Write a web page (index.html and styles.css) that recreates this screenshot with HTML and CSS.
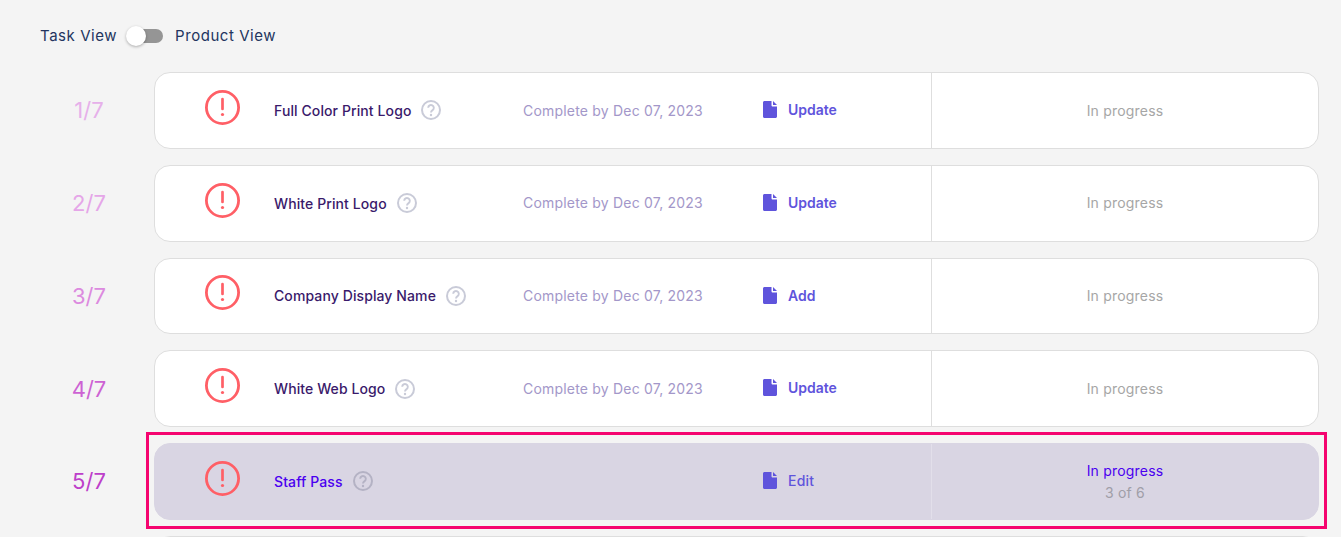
FILE: index.html
```html
<!DOCTYPE html>
<html lang="en">
<head>
    <meta charset="UTF-8">
    <meta name="viewport" content="width=device-width, initial-scale=1.0">
    <title>Tasks</title>
    <link rel="stylesheet" href="styles.css">
</head>
<body>
    <svg class="icon-defs" width="0" height="0">
        <symbol id="alert" viewBox="0 0 35 35">
            <circle cx="17.5" cy="17.5" r="16.1" fill="none" stroke="currentColor" stroke-width="2.8"/>
            <path d="M17.5 9v10" fill="none" stroke="currentColor" stroke-width="2.7" stroke-linecap="round"/>
            <circle cx="17.5" cy="24.5" r="1.6" fill="currentColor"/>
        </symbol>
        <symbol id="help" viewBox="0 0 20 20">
            <circle cx="10" cy="10" r="9" fill="none" stroke="currentColor" stroke-width="2"/>
            <path d="M7.2 7.8a2.8 2.8 0 1 1 4.4 2.3c-1 .7-1.6 1.2-1.6 2.3" fill="none" stroke="currentColor" stroke-width="1.9"/>
            <circle cx="10" cy="15" r="1.2" fill="currentColor"/>
        </symbol>
        <symbol id="doc" viewBox="0 0 14 17">
            <path d="M1.5 0H8.5V4.2C8.5 5 9 5.5 9.8 5.5H14V15.5C14 16.3 13.3 17 12.5 17H1.5C.7 17 0 16.3 0 15.5V1.5C0 .7.7 0 1.5 0ZM10 0L14 4H10Z" fill="currentColor"/>
        </symbol>
    </svg>

    <div class="view-toggle">
        <span>Task View</span>
        <span class="switch"><span class="switch-knob"></span></span>
        <span>Product View</span>
    </div>

    <div class="task-list">
        <div class="task-row">
            <div class="step step-1">1/7</div>
            <div class="card">
                <svg class="alert-icon"><use href="#alert"/></svg>
                <div class="task-name">Full Color Print Logo <svg class="help-icon"><use href="#help"/></svg></div>
                <div class="due">Complete by Dec 07, 2023</div>
                <div class="action"><svg class="doc-icon"><use href="#doc"/></svg>Update</div>
                <div class="status">In progress</div>
            </div>
        </div>
        <div class="task-row">
            <div class="step step-2">2/7</div>
            <div class="card">
                <svg class="alert-icon"><use href="#alert"/></svg>
                <div class="task-name">White Print Logo <svg class="help-icon"><use href="#help"/></svg></div>
                <div class="due">Complete by Dec 07, 2023</div>
                <div class="action"><svg class="doc-icon"><use href="#doc"/></svg>Update</div>
                <div class="status">In progress</div>
            </div>
        </div>
        <div class="task-row">
            <div class="step step-3">3/7</div>
            <div class="card">
                <svg class="alert-icon"><use href="#alert"/></svg>
                <div class="task-name">Company Display Name <svg class="help-icon"><use href="#help"/></svg></div>
                <div class="due">Complete by Dec 07, 2023</div>
                <div class="action"><svg class="doc-icon"><use href="#doc"/></svg>Add</div>
                <div class="status">In progress</div>
            </div>
        </div>
        <div class="task-row">
            <div class="step step-4">4/7</div>
            <div class="card">
                <svg class="alert-icon"><use href="#alert"/></svg>
                <div class="task-name">White Web Logo <svg class="help-icon"><use href="#help"/></svg></div>
                <div class="due">Complete by Dec 07, 2023</div>
                <div class="action"><svg class="doc-icon"><use href="#doc"/></svg>Update</div>
                <div class="status">In progress</div>
            </div>
        </div>
        <div class="task-row">
            <div class="step step-5">5/7</div>
            <div class="card card-active">
                <svg class="alert-icon"><use href="#alert"/></svg>
                <div class="task-name">Staff Pass <svg class="help-icon"><use href="#help"/></svg></div>
                <div class="due"></div>
                <div class="action"><svg class="doc-icon"><use href="#doc"/></svg>Edit</div>
                <div class="status">
                    <div class="status-label">In progress</div>
                    <div class="status-count">3 of 6</div>
                </div>
                <div class="highlight"></div>
            </div>
        </div>
        <div class="task-row">
            <div class="step"></div>
            <div class="card">
                <div></div><div></div><div></div><div></div>
                <div class="status"></div>
            </div>
        </div>
    </div>
</body>
</html>
```

FILE: styles.css
```css
html, body {
    height: 537px;
    overflow: hidden;
}
body {
    margin: 0;
    background-color: #f4f4f4;
    font-family: Inter, "Liberation Sans", sans-serif;
    font-size: 14px;
}
.icon-defs {
    position: absolute;
}
.view-toggle {
    display: flex;
    align-items: center;
    height: 20px;
    padding: 25px 0 0 40px;
    color: #23345f;
    font-size: 15px;
    letter-spacing: 0.55px;
}
.switch {
    position: relative;
    width: 36px;
    height: 14px;
    margin: 2px 12px 0 10px;
    border-radius: 7px;
    background-color: #959595;
}
.switch-knob {
    position: absolute;
    top: -3px;
    left: -1px;
    width: 20px;
    height: 20px;
    border-radius: 50%;
    background-color: white;
    box-shadow: 0 1px 3px rgba(0, 0, 0, 0.3);
}
.task-list {
    display: flex;
    flex-direction: column;
    gap: 16px;
    padding: 27px 22px 0 22px;
}
.task-row {
    display: flex;
    align-items: center;
}
.step {
    flex: 0 0 132px;
    box-sizing: border-box;
    padding: 0 0 0 2px;
    text-align: center;
    font-size: 22px;
}
.step-1 { color: #e6b0ea; }
.step-2 { color: #e5a6e8; }
.step-3 { color: #dc8adf; }
.step-4 { color: #cd62d3; }
.step-5 { color: #bd3fca; }
.card {
    position: relative;
    flex: 1;
    display: grid;
    grid-template-columns: 119px 249px 240px 168px 1fr;
    align-items: center;
    height: 76.75px;
    box-sizing: border-box;
    border: 1px solid #dedede;
    border-radius: 16px;
    background-color: white;
}
.alert-icon {
    width: 35px;
    height: 35px;
    margin: -6px 0 0 50px;
    color: #ff5f66;
}
.task-name {
    display: flex;
    align-items: center;
    gap: 10px;
    color: #3a1a6b;
    font-weight: 500;
    font-size: 14px;
    letter-spacing: 0.1px;
}
.help-icon {
    width: 20px;
    height: 20px;
    color: #c9cbd8;
}
.due {
    margin-top: -0.5px;
    color: #a397c9;
    font-size: 14px;
    letter-spacing: 0.2px;
}
.action {
    display: flex;
    align-items: center;
    gap: 11px;
    margin-top: -1.5px;
    color: #5f54dc;
    font-weight: 600;
    font-size: 14px;
}
.doc-icon {
    width: 14px;
    height: 17px;
}
.status {
    display: flex;
    flex-direction: column;
    justify-content: center;
    align-self: stretch;
    gap: 5px;
    padding-bottom: 0.5px;
    border-left: 1px solid #dedede;
    color: #a6a6a6;
    font-size: 14px;
    letter-spacing: 0.2px;
    text-align: center;
}
.card-active {
    border-color: #d9d5e3;
    background-color: #d9d5e3;
}
.card-active .task-name {
    color: #4a00f0;
}
.card-active .help-icon {
    color: #b4b2c4;
}
.card-active .action {
    font-weight: 500;
    letter-spacing: 0.2px;
}
.card-active .status {
    border-left-color: #e2dfea;
}
.status-label {
    color: #4a00f0;
}
.status-count {
    color: #a09ea8;
}
.highlight {
    position: absolute;
    top: -12px;
    right: -9px;
    bottom: -10px;
    left: -9px;
    border: 3px solid #f5046f;
}
```
